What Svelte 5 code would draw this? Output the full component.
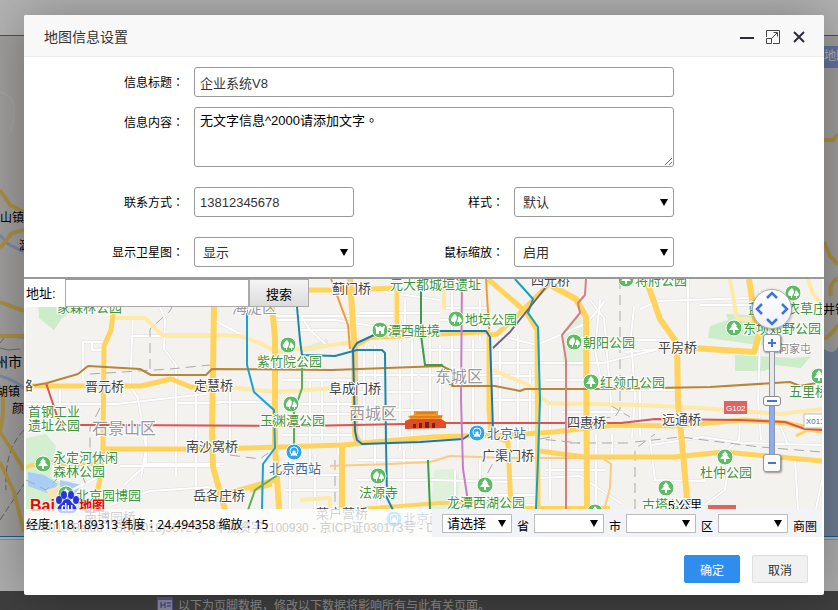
<script>
    const park = "#3c943c";
    const dark = "#444";

    let title = "企业系统V8";
    let content = "无文字信息^2000请添加文字。";
    let phone = "13812345678";
    let address = "";
    let zoom = 10;

    const areas = [
        { d: "M38 300h50l-8 7-18 11-8 12-15-12z", c: "#cdecc9" },
        { d: "M26 438l20-4 10 12-6 30 30 20 8 20H26z", c: "#d3eed0" },
        { d: "M28 472l16 3 14 9-8 10-22-8z M60 480l22 5-8 10-14-5z", c: "#a9cdf5" },
        { d: "M434 470l20-1 6 10-3 30h-26z", c: "#dff1db" },
        { d: "M570 322l12-6 2 50h-22l2-30z", c: "#dff1db" },
        { d: "M726 314l42 2-2 30-58-8 2-12 18-6z", c: "#cdecc9" },
        { d: "M735 355l60 3 16-2-10 12-26-3-10 6h-30z", c: "#cdecc9" },
        { d: "M305 347l22-8 3 8-30 6z", c: "#e0efdd" },
        { d: "M46 490l14-4 8 12-14 6z", c: "#ffe3b3" }
    ];

    // small streets, drawn white on a grey casing
    const streets = [
        "M83 379V342h22M92 342v8h12", "M133 316l-3 70 8 12 8 50-5 30",
        "M160 307l5 12-1 30 12 16v110", "M60 390v25M26 404h90l90-10",
        "M130 336h85M120 466h100M175 403h45", "M144 464h80M146 430v35l-22 20",
        "M60 496l40-20M110 505l40-14 60-4", "M214 320l26 14M196 386v120M214 402h60M230 385v60",
        "M275 320h60l50 8M290 300l20 30 20 18", "M275 316h120M310 380v90M322 380v60M338 395v60",
        "M290 404h66M285 414h70M282 435h74M282 380h74", "M300 330h56M372 330l-8 20M364 350v90",
        "M375 345v120M400 340v110M412 340v110", "M357 375h60M357 392h66M357 410h64M357 460h80",
        "M360 313h80M384 292l56 8M405 300v40", "M356 480h80M404 450v60M375 470l5 40M285 475h60",
        "M285 490h60M290 460v50M315 455v55", "M420 350h70M420 375h70M430 330v100M440 345v80",
        "M452 340v85M473 340v90M480 300v40", "M444 308h44M440 320h50M452 280v60",
        "M493 350h45M493 363h110l60-15M493 376h45", "M493 400h45M500 335v95M518 335v120M530 370v65",
        "M497 335l40 10 50-22 18-22", "M590 300l14 18 8 95M600 300l-5 50 8 40", "M625 390h50M562 412h60",
        "M545 380h40M545 470h60M550 400v100", "M540 478l40-2 42 28", "M596 340h80M596 435v70M612 435v25",
        "M480 460v50M455 470v40M430 480l80 2", "M480 478h60M497 495h40M460 505h80",
        "M640 309l18-8 90-3M634 307l-3 30 4 60-3 40", "M626 352l42-4M688 279v60M640 390v45",
        "M760 290v50l-2 60 3 40M700 305h50", "M740 425l-1 15-24 20M650 440l5 40 50 1",
        "M652 445l50-8 40 6 80 2M780 425l8 20", "M795 458l3 52M730 455l-5 35-20 15M822 480l-6 29"
    ];

    const rails = [
        "M150 369v-40l20-18 4-8", "M90 374l80-5 40-4", "M100 408l-10 20v20", "M26 480l20 10 30-30 10 25",
        "M620 279v130l-5 8-30 2", "M635 509v-60l20-15M635 442l45-5 80 10 62 5", "M230 455l30 4 8-6",
        "M335 460v50M550 437l-10 2 40 4", "M500 450l-14 26M610 405l20 12M570 443h60"
    ];

    const pale = [
        "M115 318h30l17 17h51l27 1 22 8 14 8 79-10", "M216 386l60 6 60-4", "M396 279l-1 56M444 279v30",
        "M493 370l35 15 20 18 92 2 60 3 80 6 42-5", "M730 279l7 40h18M808 279l5 15 9 10", "M300 500l30-2v12"
    ];

    const orange = [
        "M330 466l60-2 40-2 20-6 60 2h92l9 6-1 24-6 22", "M357 342v92l4 8"
    ];

    const highways = [
        { d: "M114 307l-3 23-7 16-1 100-3 34-8 30", w: 5 },
        { d: "M214 307l-2 125 1 35 12 43", w: 6 },
        { d: "M272 307l3 30v110l4 62", w: 6 },
        { d: "M350 279l4 60 1 95 2 8", w: 6 },
        { d: "M342 445v64", w: 6 },
        { d: "M104 449h109l130-4 30-3 60-5 60-2", w: 5 },
        { d: "M26 467l20-6 15 3h40", w: 4 },
        { d: "M26 386h115l30-7 20 8h24", w: 5 },
        { d: "M309 290h38l50-2", w: 5 },
        { d: "M397 291v42", w: 4 },
        { d: "M356 346l14-8 120-6", w: 4 },
        { d: "M489 335v75l2 25 17 7 3 67", w: 5 },
        { d: "M488 279l38 33 11 18 1 179", w: 5 },
        { d: "M549 284l-30 30-22 20-7 1", w: 5 },
        { d: "M552 286l24 13 10 18 1 192", w: 6 },
        { d: "M494 436l60-4 60-7 60 1 70-6 42 3 36 8", w: 5 },
        { d: "M540 451l44 6h90l50-5 98 9", w: 5 },
        { d: "M646 279l14 40 17 24 1 60 4 40 6 66", w: 6 },
        { d: "M678 347l76 5 4-13-9-60", w: 6 },
        { d: "M204 500l71-20M250 490l22-6", w: 5 },
        { d: "M360 509l40-3 40-3 60-2M520 508h90", w: 4 },
        { d: "M796 436l12-6 14 2", w: 3 }
    ];

    const metro = [
        { d: "M46 383l11 33 5 9h50l190 1 103-2M446 423h175l34-4 85 1 45 2 20 7 17 1", c: "#dc5450" },
        { d: "M26 387l21-4 31-9 10-8 52 3 11 6h55l6-6 120 1 110-4 12 6-2 14h43l25 5 5-2h75l110-2 80-5 10 4 22-4", c: "#b98536" },
        { d: "M297 307l3 33 2 15 33 1 22-6h25l3 3 1 90 1 55 6 12", c: "#1d86a8" },
        { d: "M374 335l-17 8-4 6 2 82 2 9 5 4 58-2 43-3 12-8M386 331h100l4 6 3 93", c: "#1d75b0" },
        { d: "M247 307v58l7 27 11 10 9 8 1 38-12 16-1 45", c: "#1ba0d8" },
        { d: "M515 279l18 20-5 14 10 14 2 73-2 60-2 49", c: "#16a0be" },
        { d: "M462 279l-1 120 2 70 4 26v14", c: "#c87dcb" },
        { d: "M586 279l-1 16-7 8 2 10-18 22 4 25v149", c: "#d58080" },
        { d: "M421 279v56l4 30h17l8 20M428 460l2 49", c: "#3c9c47" },
        { d: "M302 355v33l-8 24v40M293 465l-38 25-7 20", c: "#5eae55" },
        { d: "M331 279l17 46 2 24M486 279l3 50", c: "#f29b2e" },
        { d: "M550 282l-40 50-17 16", c: "#6f6073" }
    ];

    const labels = [
        { x: 57, y: 312, t: "家森林公园", c: park },
        { x: 232, y: 313, t: "海淀区", c: "#999", s: 15 },
        { x: 332, y: 293, t: "蓟门桥", c: dark },
        { x: 390, y: 289, t: "元大都城垣遗址", c: park },
        { x: 531, y: 285, t: "四元桥", c: dark },
        { x: 635, y: 285, t: "将府公园", c: park },
        { x: 388, y: 335, t: "潭西胜境", c: park },
        { x: 465, y: 324, t: "地坛公园", c: park },
        { x: 583, y: 347, t: "朝阳公园", c: park },
        { x: 658, y: 352, t: "平房桥", c: dark },
        { x: 748, y: 313, t: "蓝调薰衣草庄", c: park },
        { x: 743, y: 333, t: "东坝郊野公园", c: park },
        { x: 778, y: 353, t: "何家屯", c: "#888", s: 11 },
        { x: 257, y: 366, t: "紫竹院公园", c: park },
        { x: 20, y: 390, t: "路", c: dark },
        { x: 85, y: 391, t: "晋元桥", c: dark },
        { x: 194, y: 390, t: "定慧桥", c: dark },
        { x: 329, y: 393, t: "阜成门桥", c: dark },
        { x: 435, y: 382, t: "东城区", c: "#999", s: 16 },
        { x: 349, y: 419, t: "西城区", c: "#999", s: 16 },
        { x: 600, y: 387, t: "红领巾公园", c: park },
        { x: 789, y: 396, t: "五里桥", c: park },
        { x: 28, y: 416, t: "首钢工业", c: park },
        { x: 28, y: 430, t: "遗址公园", c: park },
        { x: 92, y: 434, t: "石景山区", c: "#999", s: 16 },
        { x: 260, y: 425, t: "玉渊潭公园", c: park },
        { x: 567, y: 427, t: "四惠桥", c: dark },
        { x: 662, y: 424, t: "远通桥", c: dark },
        { x: 487, y: 438, t: "北京站", c: "#3d6b95" },
        { x: 186, y: 451, t: "南沙窝桥", c: dark },
        { x: 53, y: 462, t: "永定河休闲", c: park },
        { x: 53, y: 476, t: "森林公园", c: park },
        { x: 76, y: 500, t: "北京园博园", c: park },
        { x: 193, y: 500, t: "岳各庄桥", c: dark },
        { x: 269, y: 473, t: "北京西站", c: "#3d6b95" },
        { x: 359, y: 497, t: "法源寺", c: park },
        { x: 482, y: 460, t: "广渠门桥", c: dark },
        { x: 447, y: 507, t: "龙潭西湖公园", c: park },
        { x: 700, y: 477, t: "杜仲公园", c: park },
        { x: 642, y: 509, t: "古塔公园", c: park },
        { x: 84, y: 522, t: "南博园桥", c: dark },
        { x: 316, y: 518, t: "菜户营桥", c: dark },
        { x: 403, y: 523, t: "北京南站", c: "#3d6b95" }
    ];

    const markers = [
        { x: 288, y: 345, k: "twin" }, { x: 291, y: 404, k: "twin" }, { x: 380, y: 330, k: "gate" },
        { x: 456, y: 319, k: "twin" }, { x: 574, y: 342, k: "twin" }, { x: 591, y: 382, k: "tree" },
        { x: 626, y: 279, k: "tree" }, { x: 793, y: 293, k: "twin" }, { x: 734, y: 328, k: "tree" },
        { x: 819, y: 376, k: "tree" }, { x: 43, y: 464, k: "tree" }, { x: 66, y: 494, k: "tree" },
        { x: 378, y: 476, k: "twin" }, { x: 485, y: 485, k: "tree" }, { x: 725, y: 457, k: "tree" },
        { x: 666, y: 488, k: "tree" }, { x: 595, y: 512, k: "tree" },
        { x: 294, y: 452, k: "rail" }, { x: 477, y: 433, k: "rail" }, { x: 394, y: 519, k: "rail" }
    ];

    const regions = ["省", "市", "区", "商圏"];
    const pans = [
        { name: "up", d: "M2 8l5-5 5 5" },
        { name: "left", d: "M9 2L4 7l5 5" },
        { name: "right", d: "M5 2l5 5-5 5" },
        { name: "down", d: "M2 5l5 5 5-5" }
    ];
</script>

<div class="page">
    <div class="page_top"></div>
    <div class="page_map">
        <svg class="edge west" viewBox="0 36 24 500" aria-hidden="true">
            <path d="M0 36h24v500H0z" fill="#e3e1de" />
            <path d="M0 92q22 5 10 40M0 380q30-30 24-90" fill="none" stroke="#efedeb" />
            <path d="M0 235l8 9 16 8" fill="none" stroke="#aec6e8" stroke-width="3" />
            <path d="M0 376q14 4 24 12" fill="none" stroke="#aec6e8" stroke-width="3" />
            <path d="M0 343l5-6 19 1M0 348l8 2 12-1" fill="none" stroke="#999" />
            <path d="M24 430q-20 20-18 60M0 520l24-36" fill="none" stroke="#8a8a8a" stroke-dasharray="7 3" />
            <path d="M0 190l10 15 14 7M0 248l12-15 12-3M0 302l24 9M0 336h24M3 389v25l-3 18 12 18 12 20M0 462l14 30 10 40" fill="none" stroke="#f2cd60" stroke-width="4" />
            <text x="0" y="222">山镇</text>
            <text x="19" y="250">潞</text>
            <text class="city" x="-6" y="367">州市</text>
            <text x="-4" y="396">胡镇</text>
            <text x="12" y="413">颜庄</text>
        </svg>
        <div class="page_tag">地图</div>
        <svg class="edge east" viewBox="824 36 14 500" aria-hidden="true">
            <path d="M824 36h14v500h-14z" fill="#e3e1de" />
            <path d="M824 349q9 7 14-2v189h-14z" fill="#9fb4d2" />
            <path d="M824 140h9l5-6M824 242l6 14 8 8M838 278q-10 6-7 18M838 325q-10 14-14 13" fill="none" stroke="#f2cd60" stroke-width="4" />
            <text x="823" y="314">井镇</text>
        </svg>
    </div>
    <div class="page_gap"></div>
    <div class="page_foot">
        <svg width="16" height="14" viewBox="0 0 16 14" aria-hidden="true">
            <path d="M0 0h16v14H0z" fill="#7777c4" />
            <path d="M1 3h14v10H1z" fill="#c6c6e6" />
            <path d="M4 5v6M8 5v6M4 8h4M10 6h4M10 9h4" stroke="#5555a8" />
        </svg>
        <span>以下为页脚数据，修改以下数据将影响所有与此有关页面。</span>
    </div>
</div>

<div class="shade">
    <div class="dialog" role="dialog" aria-labelledby="dlg-title">
        <header>
            <h1 id="dlg-title">地图信息设置</h1>
            <button type="button" aria-label="最小化">
                <svg width="14" height="14" viewBox="0 0 14 14"><path d="M0 8h14" stroke="#2e2d3c" stroke-width="2" /></svg>
            </button>
            <button type="button" aria-label="最大化">
                <svg width="14" height="14" viewBox="0 0 14 14" fill="none" stroke="#444">
                    <path d="M.5 7V.5h13v13H7M.5 8.500h5v5h-5zM6 8l5-5M7.500 2.500h4v4" />
                </svg>
            </button>
            <button type="button" aria-label="关闭">
                <svg width="14" height="14" viewBox="0 0 14 14"><path d="M2 2l10 10M12 2L2 12" stroke="#2e2d3c" stroke-width="2" /></svg>
            </button>
        </header>

        <form class="fields">
            <label for="title">信息标题：</label>
            <input id="title" class="wide" type="text" bind:value={title} />

            <label for="content">信息内容：</label>
            <textarea id="content" class="wide" spellcheck="false" bind:value={content}></textarea>

            <label for="phone">联系方式：</label>
            <input id="phone" type="text" bind:value={phone} />
            <label for="theme">样式：</label>
            <span class="pick"><select id="theme"><option>默认</option></select></span>

            <label for="satellite">显示卫星图：</label>
            <span class="pick"><select id="satellite"><option>显示</option><option>隐藏</option></select></span>
            <label for="wheel">鼠标缩放：</label>
            <span class="pick"><select id="wheel"><option>启用</option><option>禁用</option></select></span>
        </form>

        <section class="map">
            <svg class="canvas" viewBox="26 279 796 258" aria-hidden="true">
                <path d="M26 279h796v258H26z" fill="#f3f2ef" />
                {#each areas as a}
                    <path d={a.d} fill={a.c} />
                {/each}
                <g fill="none" stroke-linejoin="round">
                    {#each streets as d}
                        <path {d} stroke="#dddde0" stroke-width="3" />
                    {/each}
                    {#each streets as d}
                        <path {d} stroke="#fff" stroke-width="2" />
                    {/each}
                    {#each rails as d}
                        <path {d} stroke="#aaa" stroke-dasharray="10 6" />
                    {/each}
                    {#each pale as d}
                        <path {d} stroke="#ffe9a8" stroke-width="4" />
                    {/each}
                    {#each highways as h}
                        <path d={h.d} stroke="#ffd35c" stroke-width={h.w} />
                    {/each}
                    {#each orange as d}
                        <path {d} stroke="#fbcb82" stroke-width="2" />
                    {/each}
                    {#each metro as m}
                        <path d={m.d} stroke={m.c} stroke-width="2" />
                    {/each}
                </g>

                <!-- Tiananmen -->
                <path d="M414 411h24v4h5l-2 5h-30l-3-4 6-1z" fill="#f39a24" />
                <path d="M412 419h28v3h-28z" fill="#c63c1a" />
                <path d="M405 421l5-2h31l5 3v6l-41 1z" fill="#e14b27" />
                <path d="M413 424h3v4h-3zM419 423h3v5h-3zM425 422h4v6h-4zM432 423h3v5h-3z" fill="#7a2314" />
                <path d="M416 413h20M410 417h32" stroke="#d4601c" />

                {#each markers as m}
                    <g transform="translate({m.x} {m.y})">
                        <circle r="8" fill={m.k === "rail" ? "#2fa4ee" : "#5dbb63"} stroke="#fff" />
                        {#if m.k === "tree"}
                            <path d="M0-6L3-2H2l3 4H1v3h-2V2h-4l3-4h-1z" fill="#fff" />
                        {:else if m.k === "twin"}
                            <path d="M-1-5Q1-3 1-1L0 2-1 3v2h-1V3Q-5 3-5 1-5-2-1-5zM3-3q3 3 3 5 0 1-2 1v2H3V3H1q0-2 1-3 0-2 1-3z" fill="#fff" />
                        {:else if m.k === "gate"}
                            <path d="M-5-4h2v1h2v-1h2v1h2v-1h2l-1 4v4H1V1h-2v3h-3V0z" fill="#fff" />
                        {:else}
                            <path d="M-3 4L-1 1M3 4L1 1M-3 3h6M-1-1h2v3h-2z" stroke="#fff" fill="#fff" />
                            <circle r="4" cy="-1" fill="none" stroke="#fff" />
                        {/if}
                    </g>
                {/each}

                {#each labels as l}
                    <text x={l.x} y={l.y} fill={l.c} font-size={l.s ?? 13}>{l.t}</text>
                {/each}

                <path d="M724 401h23v13h-23z" fill="#dd6463" />
                <text class="road" x="726" y="411" fill="#fff">G102</text>
                <path d="M804 414h20v14h-20z" fill="#fff" stroke="#bbb" />
                <text class="road" x="806" y="424" fill="#666">X013</text>
                <text x="668" y="510" font-size="12">5 公里</text>
                <path d="M708 505h28v5h-28z" fill="#d8685f" />
            </svg>

            <form class="search">
                <label for="address">地址:</label>
                <input id="address" type="text" bind:value={address} />
                <button type="button">搜索</button>
            </form>

            <div class="nav">
                <div class="pan">
                    {#each pans as p}
                        <button type="button" class={p.name} aria-label={p.name}>
                            <svg width="14" height="14" viewBox="0 0 14 14"><path d={p.d} fill="none" stroke="#3f74dc" stroke-width="2.500" /></svg>
                        </button>
                    {/each}
                </div>
                <button type="button" class="step" aria-label="放大">
                    <svg width="10" height="10" viewBox="0 0 10 10"><path d="M1 5h8M5 1v8" stroke="#3f74dc" stroke-width="2" /></svg>
                </button>
                <input type="range" aria-label="缩放级别" min="0" max="19" bind:value={zoom} />
                <button type="button" class="step" aria-label="缩小">
                    <svg width="10" height="10" viewBox="0 0 10 10"><path d="M1 5h8" stroke="#3f74dc" stroke-width="2" /></svg>
                </button>
            </div>

            <div class="logo">
                <span>Bai</span>
                <svg width="24" height="24" viewBox="0 0 24 24" aria-hidden="true">
                    <path d="M12 9q3 0 5 4 6 4 4 8-2 3-9 2-7 1-9-2-2-4 4-8 2-4 5-4z" />
                    <ellipse cx="4" cy="10" rx="3" ry="4" />
                    <ellipse cx="9" cy="5" rx="3" ry="4" />
                    <ellipse cx="16" cy="5" rx="3" ry="4" />
                    <ellipse cx="21" cy="10" rx="3" ry="4" />
                    <text x="6" y="21">du</text>
                </svg>
                <span class="cn">地图</span>
            </div>

            <div class="strip">
                <div class="status">
                    <span class="copyright">© 2019 Baidu - GS(2018)5572号 - 甲测资字1100930 - 京ICP证030173号 - Data</span>
                    <span class="coords">经度:118.189313 纬度：24.494358 缩放：15</span>
                </div>
                <div class="regions">
                    {#each regions as r, i}
                        <span class="pick small">
                            <select id="region-{i}"><option>{i === 0 ? "请选择" : ""}</option></select>
                        </span>
                        <label for="region-{i}">{r}</label>
                    {/each}
                </div>
            </div>
        </section>

        <footer>
            <button type="button" class="ok">确定</button>
            <button type="button">取消</button>
        </footer>
    </div>
</div>

<style>
    :global(body) {
        overflow: hidden;
        font-family: "Liberation Sans", "Noto Sans CJK SC", sans-serif;
    }

    * {
        box-sizing: border-box;
    }

    button,
    input,
    select,
    textarea {
        margin: 0;
        font-family: inherit;
        font-size: 13px;
    }

    .page {
        display: flex;
        flex-direction: column;
        height: 100vh;
        overflow: hidden;
        background: #fff;
    }

    .page_top {
        flex: none;
        height: 35px;
    }

    .page_map {
        display: flex;
        flex: none;
        justify-content: space-between;
        position: relative;
        border: solid #1e88d2;
        border-width: 1px 0;
        background: #e3e1de;
    }

    .edge {
        display: block;
        height: 500px;
        font-size: 12px;
    }

    .edge.west {
        width: 24px;
    }

    .edge.east {
        width: 14px;
    }

    .edge .city {
        font-size: 14px;
    }

    .page_tag {
        position: absolute;
        top: 10px;
        right: 0;
        width: 14px;
        height: 22px;
        overflow: hidden;
        background: #8ba4e0;
        color: #fff;
        font-size: 12px;
        line-height: 20px;
        white-space: nowrap;
    }

    .page_gap {
        flex: none;
        height: 52px;
        margin-top: 2px;
        border-top: 1px solid #ccc;
        background: #f8f8f8;
    }

    .page_foot {
        display: flex;
        flex: 1;
        gap: 5px;
        padding: 6px 0 0 157px;
        background: #5b5b5b;
        color: #c8c8c8;
        font-size: 12px;
        line-height: 18px;
    }

    .page_foot svg {
        flex: none;
    }

    .shade {
        position: absolute;
        inset: 0;
        padding: 15px 14px 15px 24px;
        background: rgba(0, 0, 0, 0.3);
    }

    .dialog {
        border-radius: 2px;
        background: #fff;
        box-shadow: 1px 1px 50px rgba(0, 0, 0, 0.3);
    }

    header {
        display: flex;
        align-items: center;
        gap: 12px;
        height: 42px;
        padding: 0 18px 0 20px;
        border-bottom: 1px solid #eee;
        border-radius: 2px 2px 0 0;
        background: #f8f8f8;
    }

    h1 {
        flex: 1;
        margin: 0;
        color: #333;
        font-size: 14px;
        font-weight: 400;
    }

    header button {
        display: flex;
        padding: 3px 0 0;
        border: 0;
        background: none;
    }

    .fields {
        display: grid;
        grid-template-columns: 160px 1fr 140px 1fr;
        grid-template-rows: 30px 70px 30px 40px;
        gap: 10px;
        padding: 10px 150px 0 0;
    }

    .fields {
        grid-template-rows: 30px 70px 40px 40px;
    }

    .fields label {
        font-family: "Liberation Sans", "Noto Sans CJK TC", sans-serif;
        font-size: 12px;
        line-height: 32px;
        text-align: right;
    }

    .fields .wide {
        grid-column: 2 / 5;
    }

    .fields input,
    textarea,
    .fields select {
        width: 100%;
        height: 30px;
        border: 1px solid #999;
        border-radius: 3px;
        background: #fff;
        color: #333;
    }

    .fields input {
        padding: 0 5px;
    }

    .fields textarea {
        height: 60px;
        padding: 4px 5px;
        color: #000;
        font-family: "Liberation Sans", "Noto Sans CJK TC", sans-serif;
        line-height: 18px;
    }

    .pick {
        position: relative;
        display: flex;
    }

    .pick::after {
        content: "";
        position: absolute;
        top: 12px;
        right: 6px;
        border: solid transparent;
        border-width: 7px 4px 0;
        border-top-color: #000;
        pointer-events: none;
    }

    select {
        appearance: none;
        padding: 0 8px;
    }

    .map {
        position: relative;
        padding: 0 2px;
        border-top: 2px solid #999;
    }

    .canvas {
        display: block;
        width: 100%;
    }

    .canvas text {
        paint-order: stroke;
        stroke: #fff;
        stroke-width: 2px;
    }

    .canvas .road {
        font-size: 8px;
        stroke: none;
    }

    .search {
        position: absolute;
        top: 0;
        left: 2px;
        display: flex;
        height: 28px;
        background: #fff;
        font-size: 13px;
        line-height: 30px;
    }

    .search label {
        width: 39px;
    }

    .search input {
        width: 184px;
        border: 1px solid #aaa;
        border-top-color: #999;
    }

    .search button {
        width: 60px;
        padding: 0;
        border: 1px solid #aaa;
        background: linear-gradient(#f4f4f4, #dcdcdc);
    }

    .nav {
        position: absolute;
        top: 10px;
        right: 32px;
        display: flex;
        flex-direction: column;
        align-items: center;
    }

    .pan {
        display: grid;
        grid-template: "a u b" 12px "l c r" 12px "d v e" 12px / 12px 12px 12px;
        width: 40px;
        height: 40px;
        padding: 1px;
        border: 1px solid #aaa;
        border-radius: 50%;
        background: linear-gradient(#fff, #eef1f6);
        box-shadow: 0 1px 3px rgba(0, 0, 0, 0.4);
    }

    .pan button {
        display: flex;
        align-items: center;
        justify-content: center;
        padding: 0;
        border: 0;
        background: none;
    }

    .pan svg {
        flex: none;
    }

    .up {
        grid-area: u;
    }

    .left {
        grid-area: l;
    }

    .right {
        grid-area: r;
    }

    .down {
        grid-area: v;
    }

    .step {
        display: flex;
        align-items: center;
        justify-content: center;
        width: 18px;
        height: 18px;
        margin-top: 5px;
        padding: 0;
        border: 1px solid #999;
        border-radius: 3px;
        background: #fafafa;
        box-shadow: 1px 1px 2px rgba(0, 0, 0, 0.4);
    }

    .nav input {
        appearance: none;
        writing-mode: vertical-lr;
        direction: rtl;
        width: 18px;
        height: 102px;
        background: none;
    }

    .nav input + .step {
        margin-top: 0;
    }

    .nav input::-webkit-slider-runnable-track {
        width: 6px;
        height: 100%;
        border: solid #8d97a8;
        border-width: 0 1px;
        background: linear-gradient(#e8e8e8 50%, #8eadf0 50%);
    }

    .nav input::-webkit-slider-thumb {
        appearance: none;
        width: 18px;
        height: 10px;
        margin-left: -7px;
        border: 1px solid #888;
        border-radius: 3px;
        background: linear-gradient(#fff 3px, #3f74dc 3px, #3f74dc 5px, #fff 5px) center / 10px 8px no-repeat #fff;
    }

    .logo {
        position: absolute;
        bottom: 23px;
        left: 6px;
        display: flex;
        align-items: flex-end;
        height: 24px;
        color: #e10601;
        font-size: 16px;
        font-weight: 700;
        line-height: 16px;
        text-shadow: 0 0 1px #fff, 0 0 2px #fff;
    }

    .logo svg {
        fill: #2932e1;
        filter: drop-shadow(0 0 1px #fff);
    }

    .logo text {
        fill: #fff;
        font-size: 10px;
        text-shadow: none;
    }

    .logo .cn {
        font-size: 13px;
    }

    .strip {
        position: absolute;
        right: 2px;
        bottom: 0;
        left: 2px;
        display: flex;
        height: 28px;
        font-size: 12px;
    }

    .status {
        position: relative;
        flex: 1;
        overflow: hidden;
        background: rgba(255, 255, 255, 0.75);
        white-space: nowrap;
    }

    .copyright {
        position: absolute;
        top: 10px;
        left: 4px;
        color: #ccc;
        line-height: 18px;
    }

    .coords {
        position: relative;
        font-family: "Noto Sans", "Noto Sans CJK TC", sans-serif;
        line-height: 32px;
    }

    .regions {
        display: flex;
        align-items: center;
        gap: 5px;
        padding: 0 5px 0 10px;
        background: #f2f3f6;
    }

    .regions label {
        padding-top: 4px;
    }

    .small select {
        width: 70px;
        height: 19px;
        padding: 0 4px;
        border: 1px solid #bbb;
        border-radius: 0;
        background: #fff;
        color: #000;
    }

    .small::after {
        top: 6px;
    }

    footer {
        display: flex;
        justify-content: flex-end;
        gap: 12px;
        padding: 18px 16px 12px;
    }

    footer button {
        width: 56px;
        height: 28px;
        padding: 0;
        border: 1px solid #dedede;
        border-radius: 2px;
        background: #f1f1f1;
        color: #333;
        font-size: 12px;
    }

    footer .ok {
        border-color: #2e8ded;
        background: #2e8ded;
        color: #fff;
    }
</style>
